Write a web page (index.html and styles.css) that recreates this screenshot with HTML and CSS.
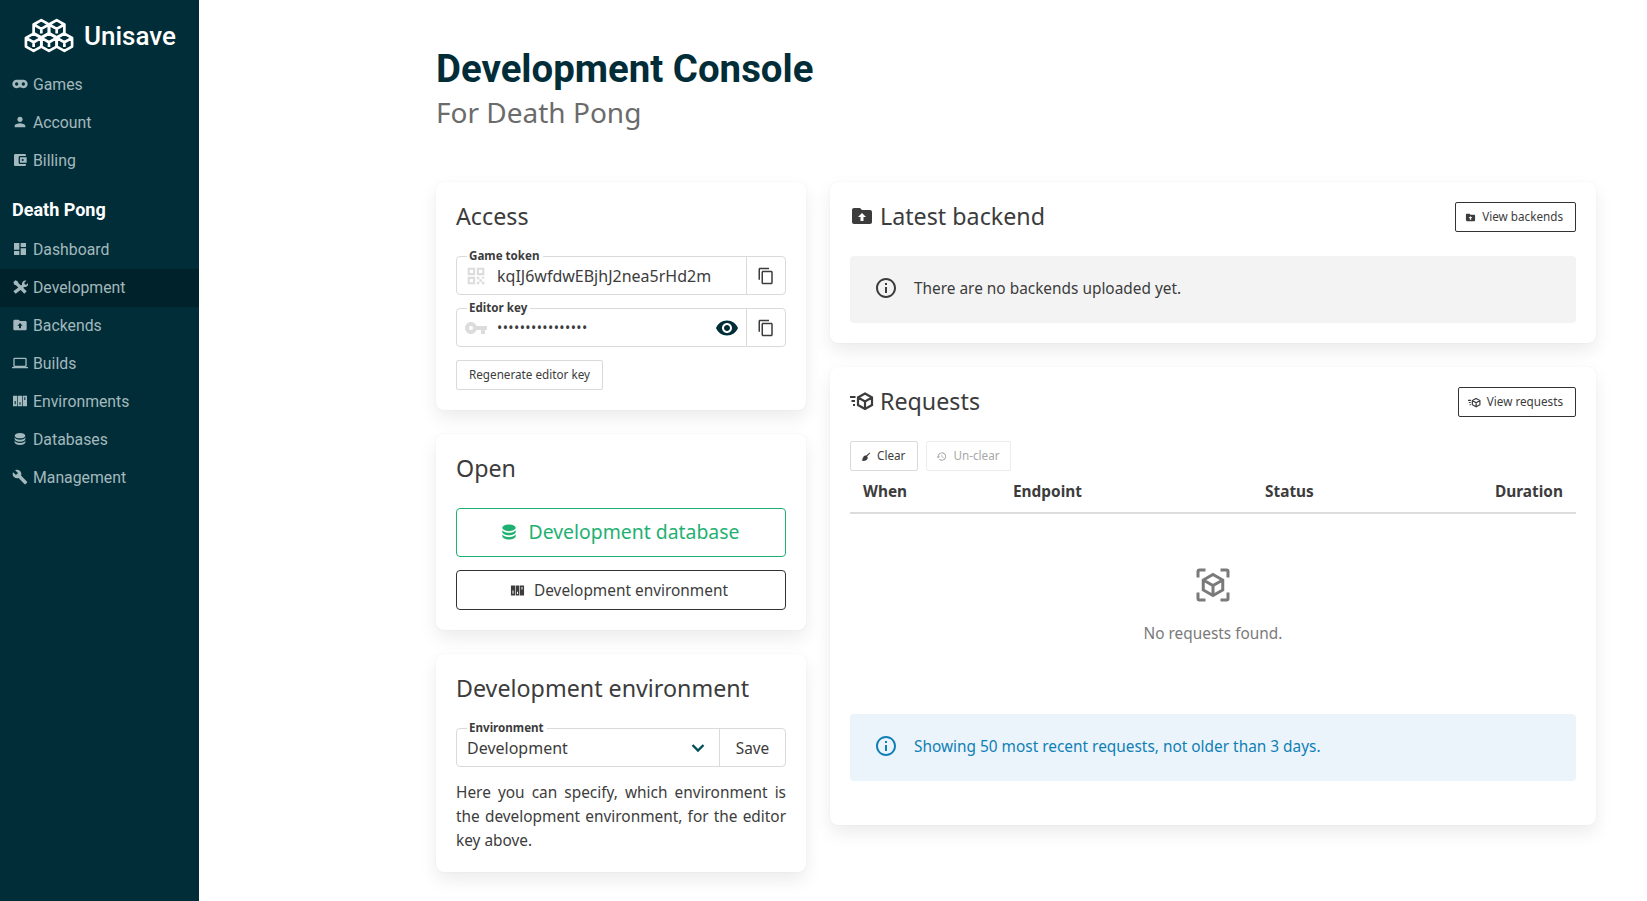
FILE: index.html
```html
<!DOCTYPE html>
<html lang="en">
<head>
    <meta charset="UTF-8">
    <title>Development Console</title>
    <link rel="stylesheet" href="styles.css">
</head>
<body>
    <!-- icon sprite -->
    <svg class="sprite" xmlns="http://www.w3.org/2000/svg">
        <symbol id="i-games" viewBox="0 0 24 24"><path fill-rule="evenodd" d="M7 5.500h10a6.500 6.500 0 0 1 0 13c-2 0-3-1.500-5-1.500s-3 1.500-5 1.500a6.500 6.500 0 0 1 0-13zm0 4a2.500 2.500 0 1 0 0 5 2.500 2.500 0 0 0 0-5zm10 0a2.500 2.500 0 1 0 0 5 2.500 2.500 0 0 0 0-5z"/></symbol>
        <symbol id="i-person" viewBox="0 0 24 24"><path d="M12 12c2.210 0 4-1.790 4-4s-1.790-4-4-4-4 1.790-4 4 1.790 4 4 4zm0 2c-2.670 0-8 1.340-8 4v2h16v-2c0-2.660-5.330-4-8-4z"/></symbol>
        <symbol id="i-wallet" viewBox="0 0 24 24"><path d="M21 18v1c0 1.100-.9 2-2 2H5c-1.110 0-2-.9-2-2V5c0-1.100.89-2 2-2h14c1.100 0 2 .9 2 2v1h-9c-1.110 0-2 .9-2 2v8c0 1.100.89 2 2 2h9zm-9-2h10V8H12v8zm4-2.500c-.83 0-1.500-.67-1.500-1.500s.67-1.500 1.500-1.500 1.500.67 1.500 1.500-.67 1.500-1.500 1.500z"/></symbol>
        <symbol id="i-dashboard" viewBox="0 0 24 24"><path d="M3 13h8V3H3v10zm0 8h8v-6H3v6zm10 0h8V11h-8v10zm0-18v6h8V3h-8z"/></symbol>
        <symbol id="i-tools" viewBox="0 0 24 24"><path d="M2 5l3-3 3.500 1.500 1 2.500L22 18.500 18.500 22 6 9.500l-2.500-1zM15 8.500c-.6-3.500 2.500-7 6.500-6l-3 3 .5 2.500 2.500.5 3-3c1 4-2.500 7-6 6.500L5.500 22 2 18.500z"/></symbol>
        <symbol id="i-folder" viewBox="0 0 24 24"><path fill-rule="evenodd" d="M20 6h-8l-2-2H4c-1.100 0-1.990.9-1.990 2L2 18c0 1.100.9 2 2 2h16c1.100 0 2-.9 2-2V8c0-1.100-.9-2-2-2zm-8 3 4 4h-2.500v4h-3v-4H8z"/></symbol>
        <symbol id="i-laptop" viewBox="0 0 24 24"><path d="M20 18c1.100 0 1.990-.9 1.990-2L22 6c0-1.100-.9-2-2-2H4c-1.100 0-2 .9-2 2v10c0 1.100.9 2 2 2H0v2h24v-2h-4zM4 6h16v10H4V6z"/></symbol>
        <symbol id="i-env" viewBox="0 0 24 24"><path fill-rule="evenodd" d="M1.500 4h6.500v16H1.500zm7.500 0h6v16H9zm7 0h6.500v16H16zM4 12h1.600v5H4zm7.200 2h1.600v3.500h-1.600zm7.200-7.500H20v4h-1.600z"/></symbol>
        <symbol id="i-db" viewBox="0 0 24 24"><path d="M12 3C7.580 3 4 4.790 4 7s3.580 4 8 4 8-1.790 8-4-3.580-4-8-4zM4 9v3c0 2.210 3.580 4 8 4s8-1.790 8-4V9c0 2.210-3.580 4-8 4s-8-1.790-8-4zm0 5v3c0 2.210 3.580 4 8 4s8-1.790 8-4v-3c0 2.210-3.580 4-8 4s-8-1.790-8-4z"/></symbol>
        <symbol id="i-wrench" viewBox="0 0 24 24"><path d="M22.700 19l-9.100-9.100c.9-2.300.4-5-1.500-6.900-2-2-5-2.400-7.400-1.300L9 6 6 9 1.600 4.700C.4 7.100.9 10.100 2.900 12.100c1.900 1.900 4.600 2.400 6.900 1.500l9.100 9.100c.4.4 1 .4 1.400 0l2.300-2.300c.5-.4.5-1.100.1-1.400z"/></symbol>
        <symbol id="i-qr" viewBox="0 0 24 24"><path fill-rule="evenodd" d="M2 2h9v9H2zm2.500 2.500v4h4v-4zM13 2h9v9h-9zm2.500 2.500v4h4v-4zM2 13h9v9H2zm2.500 2.500v4h4v-4zM13 13h3v3h-3zm6 0h3v2h-3zm-3 3h3v3h-3zm-3 3h3v3h-3zm6 0h3v3h-3z"/></symbol>
        <symbol id="i-key" viewBox="0 0 24 24"><path d="M12.650 10C11.830 7.670 9.610 6 7 6c-3.310 0-6 2.690-6 6s2.690 6 6 6c2.610 0 4.830-1.670 5.650-4H17v4h4v-4h2v-4H12.650zM7 14c-1.100 0-2-.9-2-2s.9-2 2-2 2 .9 2 2-.9 2-2 2z"/></symbol>
        <symbol id="i-copy" viewBox="0 0 24 24"><path d="M16 1H4c-1.100 0-2 .9-2 2v14h2V3h12V1zm3 4H8c-1.100 0-2 .9-2 2v14c0 1.100.9 2 2 2h11c1.100 0 2-.9 2-2V7c0-1.100-.9-2-2-2zm0 16H8V7h11v14z"/></symbol>
        <symbol id="i-eye" viewBox="0 0 24 24"><path d="M12 4.500C7 4.500 2.730 7.610 1 12c1.730 4.390 6 7.500 11 7.500s9.270-3.110 11-7.500c-1.730-4.390-6-7.500-11-7.500zM12 17c-2.760 0-5-2.240-5-5s2.240-5 5-5 5 2.240 5 5-2.240 5-5 5zm0-8c-1.660 0-3 1.340-3 3s1.340 3 3 3 3-1.340 3-3-1.340-3-3-3z"/></symbol>
        <symbol id="i-info" viewBox="0 0 24 24"><path d="M11 7h2v2h-2zm0 4h2v6h-2zm1-9C6.480 2 2 6.480 2 12s4.480 10 10 10 10-4.480 10-10S17.520 2 12 2zm0 18c-4.410 0-8-3.590-8-8s3.590-8 8-8 8 3.590 8 8-3.590 8-8 8z"/></symbol>
        <symbol id="i-cubefast" viewBox="0 0 24 24"><g fill="none" stroke="currentColor" stroke-width="2.200"><path d="M15 4.500l7 4v7.500l-7 4-7-4V8.500zM8 8.500l7 4 7-4M15 12.500V20"/><path d="M0 8h5.500M1.500 12h3.500M3 16h2"/></g></symbol>
        <symbol id="i-broom" viewBox="0 0 24 24"><path d="M21 3l1.500 1.500-7 7.500 1.500 2c-.5 3.500-3 6.500-7 7.500-2 .3-5-.2-7-2 2.500-.5 3.500-1.500 4-3-1 .3-2 .3-3 0 2-.8 3-2.500 4.500-5.500 1.500-1 3-1.500 5-1z"/></symbol>
        <symbol id="i-restore" viewBox="0 0 24 24"><path d="M13 3a9 9 0 0 0-9 9H1l4 4 4-4H6a7 7 0 1 1 2.100 5l-1.400 1.400A9 9 0 1 0 13 3zm-1 5v5l4.300 2.500.7-1.200-3.500-2.100V8z"/></symbol>
        <symbol id="i-cubescan" viewBox="0 0 24 24"><g fill="none" stroke="currentColor" stroke-width="2"><path d="M12 5l6.500 3.700v6.600L12 19l-6.500-3.700V8.700zM5.500 8.700L12 12.400l6.500-3.700M12 12.400V19"/><path d="M2 7V3a1 1 0 0 1 1-1h4M17 2h4a1 1 0 0 1 1 1v4M22 17v4a1 1 0 0 1-1 1h-4M7 22H3a1 1 0 0 1-1-1v-4"/></g></symbol>
    </svg>

    <div class="layout">
        <aside class="sidebar">
            <div class="brand">
                <svg class="brand-logo" viewBox="0 0 52 38">
                    <g fill="none" stroke="#fff" stroke-width="2.800" stroke-linejoin="round">
                        <path d="M18 2l8 4.500v9L18 20l-8-4.500v-9zM10 6.500l8 4.500 8-4.500M18 11v5"/>
                        <path d="M34 2l8 4.500v9L34 20l-8-4.500v-9zM26 6.500l8 4.500 8-4.500M34 11v5"/>
                        <path d="M10 16l8 4.500v9L10 34l-8-4.500v-9zM2 20.500l8 4.500 8-4.500M10 25v5"/>
                        <path d="M26 16l8 4.500v9L26 34l-8-4.500v-9zM18 20.500l8 4.500 8-4.500M26 25v5"/>
                        <path d="M42 16l8 4.500v9L42 34l-8-4.500v-9zM34 20.500l8 4.500 8-4.500M42 25v5"/>
                    </g>
                </svg>
                <span class="brand-name">Unisave</span>
            </div>
            <nav>
                <a class="nav-item"><svg class="nav-icon"><use href="#i-games"/></svg>Games</a>
                <a class="nav-item"><svg class="nav-icon"><use href="#i-person"/></svg>Account</a>
                <a class="nav-item"><svg class="nav-icon"><use href="#i-wallet"/></svg>Billing</a>
                <div class="nav-heading">Death Pong</div>
                <a class="nav-item"><svg class="nav-icon"><use href="#i-dashboard"/></svg>Dashboard</a>
                <a class="nav-item active"><svg class="nav-icon"><use href="#i-tools"/></svg>Development</a>
                <a class="nav-item"><svg class="nav-icon"><use href="#i-folder"/></svg>Backends</a>
                <a class="nav-item"><svg class="nav-icon"><use href="#i-laptop"/></svg>Builds</a>
                <a class="nav-item"><svg class="nav-icon"><use href="#i-env"/></svg>Environments</a>
                <a class="nav-item"><svg class="nav-icon"><use href="#i-db"/></svg>Databases</a>
                <a class="nav-item"><svg class="nav-icon"><use href="#i-wrench"/></svg>Management</a>
            </nav>
        </aside>

        <main class="content">
            <h1 class="page-title">Development Console</h1>
            <div class="page-subtitle">For Death Pong</div>

            <div class="columns">
                <div class="column">
                    <section class="card card-access">
                        <h2 class="card-title">Access</h2>
                        <div class="field">
                            <span class="field-label">Game token</span>
                            <div class="field-main">
                                <svg class="field-icon"><use href="#i-qr"/></svg>
                                <span class="field-value">kqIJ6wfdwEBjhJ2nea5rHd2m</span>
                            </div>
                            <div class="field-side"><svg class="copy-icon"><use href="#i-copy"/></svg></div>
                        </div>
                        <div class="field">
                            <span class="field-label">Editor key</span>
                            <div class="field-main">
                                <svg class="field-icon field-icon-key"><use href="#i-key"/></svg>
                                <span class="field-value field-dots">••••••••••••••••</span>
                                <svg class="eye-icon"><use href="#i-eye"/></svg>
                            </div>
                            <div class="field-side"><svg class="copy-icon"><use href="#i-copy"/></svg></div>
                        </div>
                        <button class="btn-small btn-light btn-text">Regenerate editor key</button>
                    </section>

                    <section class="card card-open">
                        <h2 class="card-title">Open</h2>
                        <button class="btn-wide btn-green"><svg class="btn-green-icon"><use href="#i-db"/></svg>Development database</button>
                        <button class="btn-wide btn-dark"><svg class="btn-dark-icon"><use href="#i-env"/></svg>Development environment</button>
                    </section>

                    <section class="card card-env">
                        <h2 class="card-title">Development environment</h2>
                        <div class="field">
                            <span class="field-label">Environment</span>
                            <div class="field-main field-select">
                                <span class="field-value">Development</span>
                                <svg class="chevron" viewBox="0 0 14 10"><path d="M1.500 2l5.500 5.500L12.500 2" fill="none" stroke="#00505c" stroke-width="2.400"/></svg>
                            </div>
                            <div class="field-side field-save">Save</div>
                        </div>
                        <p class="env-note">Here you can specify, which environment is the development environment, for the editor key above.</p>
                    </section>
                </div>

                <div class="column">
                    <section class="card card-backend">
                        <div class="card-head">
                            <h2 class="card-title"><svg class="title-icon"><use href="#i-folder"/></svg>Latest backend</h2>
                            <button class="btn-small btn-outline"><svg class="btn-icon"><use href="#i-folder"/></svg>View backends</button>
                        </div>
                        <div class="notice notice-gray">
                            <svg class="notice-icon"><use href="#i-info"/></svg>
                            There are no backends uploaded yet.
                        </div>
                    </section>

                    <section class="card card-requests">
                        <div class="card-head">
                            <h2 class="card-title"><svg class="title-icon"><use href="#i-cubefast"/></svg>Requests</h2>
                            <button class="btn-small btn-outline"><svg class="btn-icon btn-icon-wide"><use href="#i-cubefast"/></svg>View requests</button>
                        </div>
                        <div class="toolbar">
                            <button class="btn-small btn-light"><svg class="btn-icon"><use href="#i-broom"/></svg>Clear</button>
                            <button class="btn-small btn-disabled"><svg class="btn-icon"><use href="#i-restore"/></svg>Un-clear</button>
                        </div>
                        <table class="requests">
                            <thead>
                                <tr>
                                    <th class="col-when">When</th>
                                    <th class="col-endpoint">Endpoint</th>
                                    <th class="col-status">Status</th>
                                    <th class="col-duration">Duration</th>
                                </tr>
                            </thead>
                        </table>
                        <div class="empty">
                            <svg class="empty-icon"><use href="#i-cubescan"/></svg>
                            <div>No requests found.</div>
                        </div>
                        <div class="notice notice-blue">
                            <svg class="notice-icon"><use href="#i-info"/></svg>
                            Showing 50 most recent requests, not older than 3 days.
                        </div>
                    </section>
                </div>
            </div>
        </main>
    </div>
</body>
</html>
```

FILE: styles.css
```css
* {
    box-sizing: border-box;
}
html, body {
    margin: 0;
    height: 100%;
}
body {
    font-family: "Noto Sans", sans-serif;
    font-size: 15.400px;
    color: #3c3c3c;
    background: #fff;
    overflow: hidden;
}
svg {
    fill: currentColor;
    flex: none;
}
.sprite {
    display: none;
}
.layout {
    display: flex;
    height: 100vh;
}

/* sidebar */
.sidebar {
    width: 199px;
    flex: none;
    background: #012d38;
    color: #a3b9bd;
    font-family: Roboto, sans-serif;
}
.brand {
    height: 65px;
    display: flex;
    align-items: center;
    padding: 7px 0 0 24px;
}
.brand-logo {
    width: 50px;
    height: 37px;
}
.brand-name {
    margin-left: 10px;
    font-size: 26px;
    font-weight: 500;
    color: #fff;
}
.nav-item {
    display: flex;
    align-items: center;
    height: 38px;
    padding-left: 12px;
    font-size: 15.800px;
}
.nav-heading ~ .nav-item {
    padding-bottom: 2px;
}
.nav-item.active {
    background: #00232b;
}
.nav-icon {
    width: 16px;
    height: 16px;
    margin-right: 5px;
}
.nav-heading {
    height: 52px;
    padding: 20px 0 0 12px;
    font-size: 18px;
    font-weight: 700;
    color: #fff;
}

/* main */
.content {
    flex: 1;
    padding: 45px 51px 0 237px;
}
.page-title {
    margin: 0;
    font-family: Roboto, sans-serif;
    font-size: 38.400px;
    line-height: 48px;
    font-weight: 700;
    color: #012d38;
}
.page-subtitle {
    font-size: 28px;
    line-height: 38px;
    color: #6b6b6b;
    margin-bottom: 51px;
}
.columns {
    display: grid;
    grid-template-columns: 370px 766px;
    gap: 24px;
    align-items: start;
}
.column {
    display: flex;
    flex-direction: column;
    gap: 24px;
}
.card {
    background: #fff;
    border-radius: 8px;
    padding: 20px;
    box-shadow: 0 0 2px rgba(0, 0, 0, .06), 0 8px 18px rgba(0, 0, 0, .08);
}
.card-title {
    margin: 0;
    padding-bottom: 2px;
    font-size: 23.250px;
    line-height: 28px;
    font-weight: 400;
    display: flex;
    align-items: center;
}
.card-head {
    display: flex;
    justify-content: space-between;
    align-items: center;
    height: 30px;
}
.card-access .card-title,
.card-open .card-title,
.card-env .card-title {
    margin-bottom: 24px;
}
.title-icon {
    width: 24px;
    height: 24px;
    margin-right: 6px;
}

/* fields */
.field {
    position: relative;
    display: flex;
    height: 39px;
    border: 1px solid #dadada;
    border-radius: 4px;
    margin-bottom: 13px;
}
.field-label {
    position: absolute;
    left: 10px;
    top: -9px;
    padding: 0 3px 0 2px;
    background: #fff;
    font-size: 11.600px;
    line-height: 16px;
    font-weight: 700;
}
.field-main {
    flex: 1;
    display: flex;
    align-items: center;
    padding-left: 9px;
    min-width: 0;
}
.field-side {
    width: 39px;
    border-left: 1px solid #dadada;
    display: flex;
    align-items: center;
    justify-content: center;
}
.field-icon {
    width: 20px;
    height: 20px;
    margin-right: 11px;
    color: #dcdcdc;
}
.field-icon-key {
    width: 24px;
    height: 24px;
    margin: 0 9px 0 -2px;
}
.field-value {
    font-size: 16px;
}
.field-dots {
    font-size: 14px;
    letter-spacing: .4px;
    flex: 1;
}
.eye-icon {
    width: 24px;
    height: 24px;
    margin-right: 7px;
    color: #012d38;
}
.copy-icon {
    width: 18px;
    height: 18px;
}
.field-select {
    padding: 0 14px 0 10px;
    justify-content: space-between;
}
.chevron {
    width: 14px;
    height: 10px;
}
.field-save {
    width: 66px;
    padding-top: 2px;
}
.env-note {
    margin: 0 0 -1px;
    padding-top: 1px;
    line-height: 24px;
    text-align: justify;
}

/* buttons */
button {
    font-family: inherit;
    color: inherit;
    background: #fff;
    cursor: pointer;
}
.btn-small {
    height: 30px;
    padding: 0 12px 2px 9px;
    font-size: 11.700px;
    border-radius: 2px;
    display: inline-flex;
    align-items: center;
}
.btn-text {
    padding: 0 12px 3px;
}
.btn-light {
    border: 1px solid #dadada;
}
.btn-outline {
    border: 1px solid #333;
}
.btn-disabled {
    padding-right: 10px;
    border: 1px solid #ececec;
    color: #a8a8a8;
}
.btn-icon {
    width: 11px;
    height: 11px;
    margin: 2px 6px 0 0;
}
.btn-icon-wide {
    width: 13px;
    height: 13px;
}
.btn-wide {
    display: flex;
    align-items: center;
    justify-content: center;
    width: 100%;
    border-radius: 4px;
}
.btn-green {
    height: 49px;
    margin-bottom: 13px;
    padding: 0 4px 2px 0;
    border: 1px solid #1fb172;
    color: #1fb172;
    font-size: 19.400px;
}
.btn-green-icon {
    width: 20px;
    height: 20px;
    margin-right: 10px;
}
.btn-dark {
    height: 40px;
    padding: 0 4px 0 0;
    border: 1px solid #333;
    font-size: 15.400px;
}
.btn-dark-icon {
    width: 15px;
    height: 15px;
    margin-right: 9px;
}

/* notices */
.notice {
    display: flex;
    align-items: center;
    height: 67px;
    padding: 0 0 3px 24px;
    border-radius: 4px;
}
.notice-icon {
    width: 24px;
    height: 24px;
    margin-right: 16px;
}
.notice-gray {
    margin-top: 24px;
    background: #f3f3f3;
}
.notice-blue {
    background: #ebf4fb;
    color: #0f7fb5;
}
.card-requests {
    padding-bottom: 44px;
}

/* requests */
.toolbar {
    display: flex;
    gap: 8px;
    margin-top: 24px;
}
.requests {
    width: 100%;
    border-collapse: collapse;
}
.requests th {
    height: 42px;
    padding: 0 13px;
    border-bottom: 2px solid #dcdcdc;
    text-align: left;
}
.col-when {
    width: 150px;
}
.col-endpoint {
    width: 252px;
}
.requests .col-duration {
    text-align: right;
}
.empty {
    height: 200px;
    padding-top: 53px;
    text-align: center;
    color: #7a7a7a;
}
.empty-icon {
    display: block;
    width: 36px;
    height: 36px;
    margin: 0 auto 20px;
}
```
